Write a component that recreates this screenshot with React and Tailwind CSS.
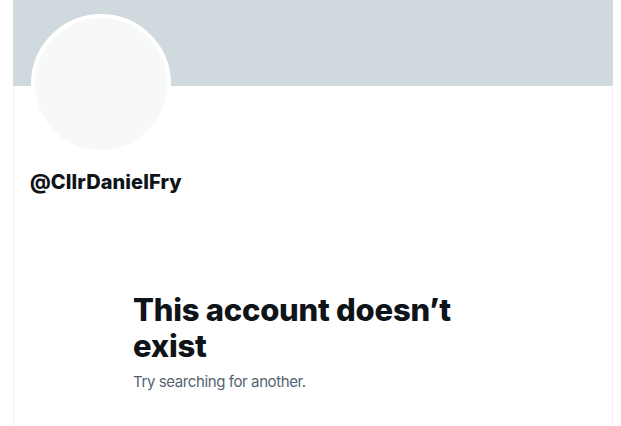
export default function App() {
  return (
    <div className="w-[621px] h-[426px] overflow-hidden bg-white" style={{ fontFamily: '"Inter", "Liberation Sans", sans-serif' }}>
      <div className="ml-[13px] w-[600px] h-full flex flex-col">
        <div className="h-[86px] bg-[#cfd9de] shrink-0" />
        <div className="flex-1 border-x border-[#eff3f4] flex flex-col">
          <div className="ml-[17px] -mt-[72px] w-[140px] h-[140px] rounded-full border-4 border-white bg-[#f7f9f9]" />
          <div className="mt-[16px] pl-[16px] text-[20px] leading-[24px] font-extrabold text-[#0f1419] tracking-[0.1px]">@CllrDanielFry</div>
          <div className="mt-[98px] mx-auto w-[400px] px-[20px]">
            <div className="text-[31px] leading-[36px] font-extrabold text-[#0f1419] tracking-[-0.25px]">This account doesn’t exist</div>
            <div className="mt-[8px] text-[15px] leading-[20px] text-[#536471] tracking-[-0.4px]">Try searching for another.</div>
          </div>
        </div>
      </div>
    </div>
  );
}
